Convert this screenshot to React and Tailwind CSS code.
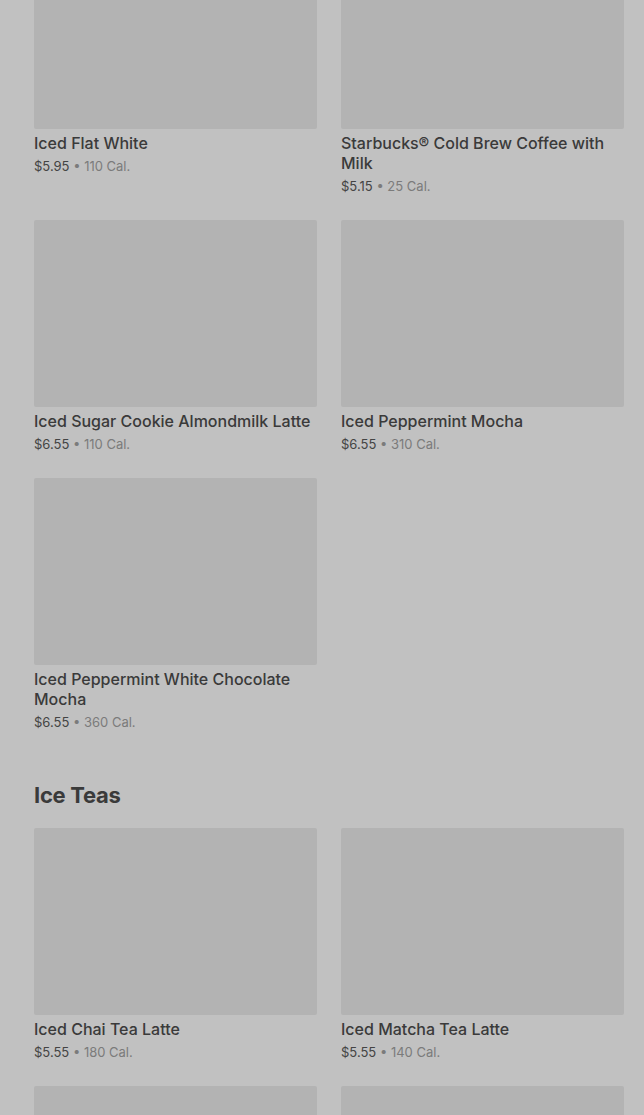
import React from "react";

const Card = ({ name, price, cal }) => (
  <div className="flex flex-col">
    <div className="h-[187px] rounded-[2px] bg-[#b3b3b3]" />
    {name && (
      <>
        <div className="mt-[4px] text-[16px] leading-[20px] font-medium text-[#3a3a3a]">{name}</div>
        <div className="mt-[3px] text-[13px] leading-[20px] text-[#444444]">
          {price}
          <span className="text-[#7b7b7b]"> • {cal} Cal.</span>
        </div>
      </>
    )}
  </div>
);

export default function App() {
  return (
    <div
      className="bg-[#c1c1c1] pl-[34px] pr-[20px] overflow-hidden h-[1115px]"
      style={{ fontFamily: "Inter, 'Noto Sans', sans-serif" }}
    >
      <div className="-mt-[58px] grid grid-cols-2 gap-x-[24px] gap-y-[24px]">
        <Card name="Iced Flat White" price="$5.95" cal="110" />
        <Card name="Starbucks® Cold Brew Coffee with Milk" price="$5.15" cal="25" />
        <Card name="Iced Sugar Cookie Almondmilk Latte" price="$6.55" cal="110" />
        <Card name="Iced Peppermint Mocha" price="$6.55" cal="310" />
        <Card name="Iced Peppermint White Chocolate Mocha" price="$6.55" cal="360" />
      </div>
      <h2 className="mt-[47px] mb-[17px] text-[22px] leading-[32px] font-bold text-[#3a3a3a] tracking-[-0.3px]">
        Ice Teas
      </h2>
      <div className="grid grid-cols-2 gap-x-[24px] gap-y-[24px]">
        <Card name="Iced Chai Tea Latte" price="$5.55" cal="180" />
        <Card name="Iced Matcha Tea Latte" price="$5.55" cal="140" />
        <Card />
        <Card />
      </div>
    </div>
  );
}
